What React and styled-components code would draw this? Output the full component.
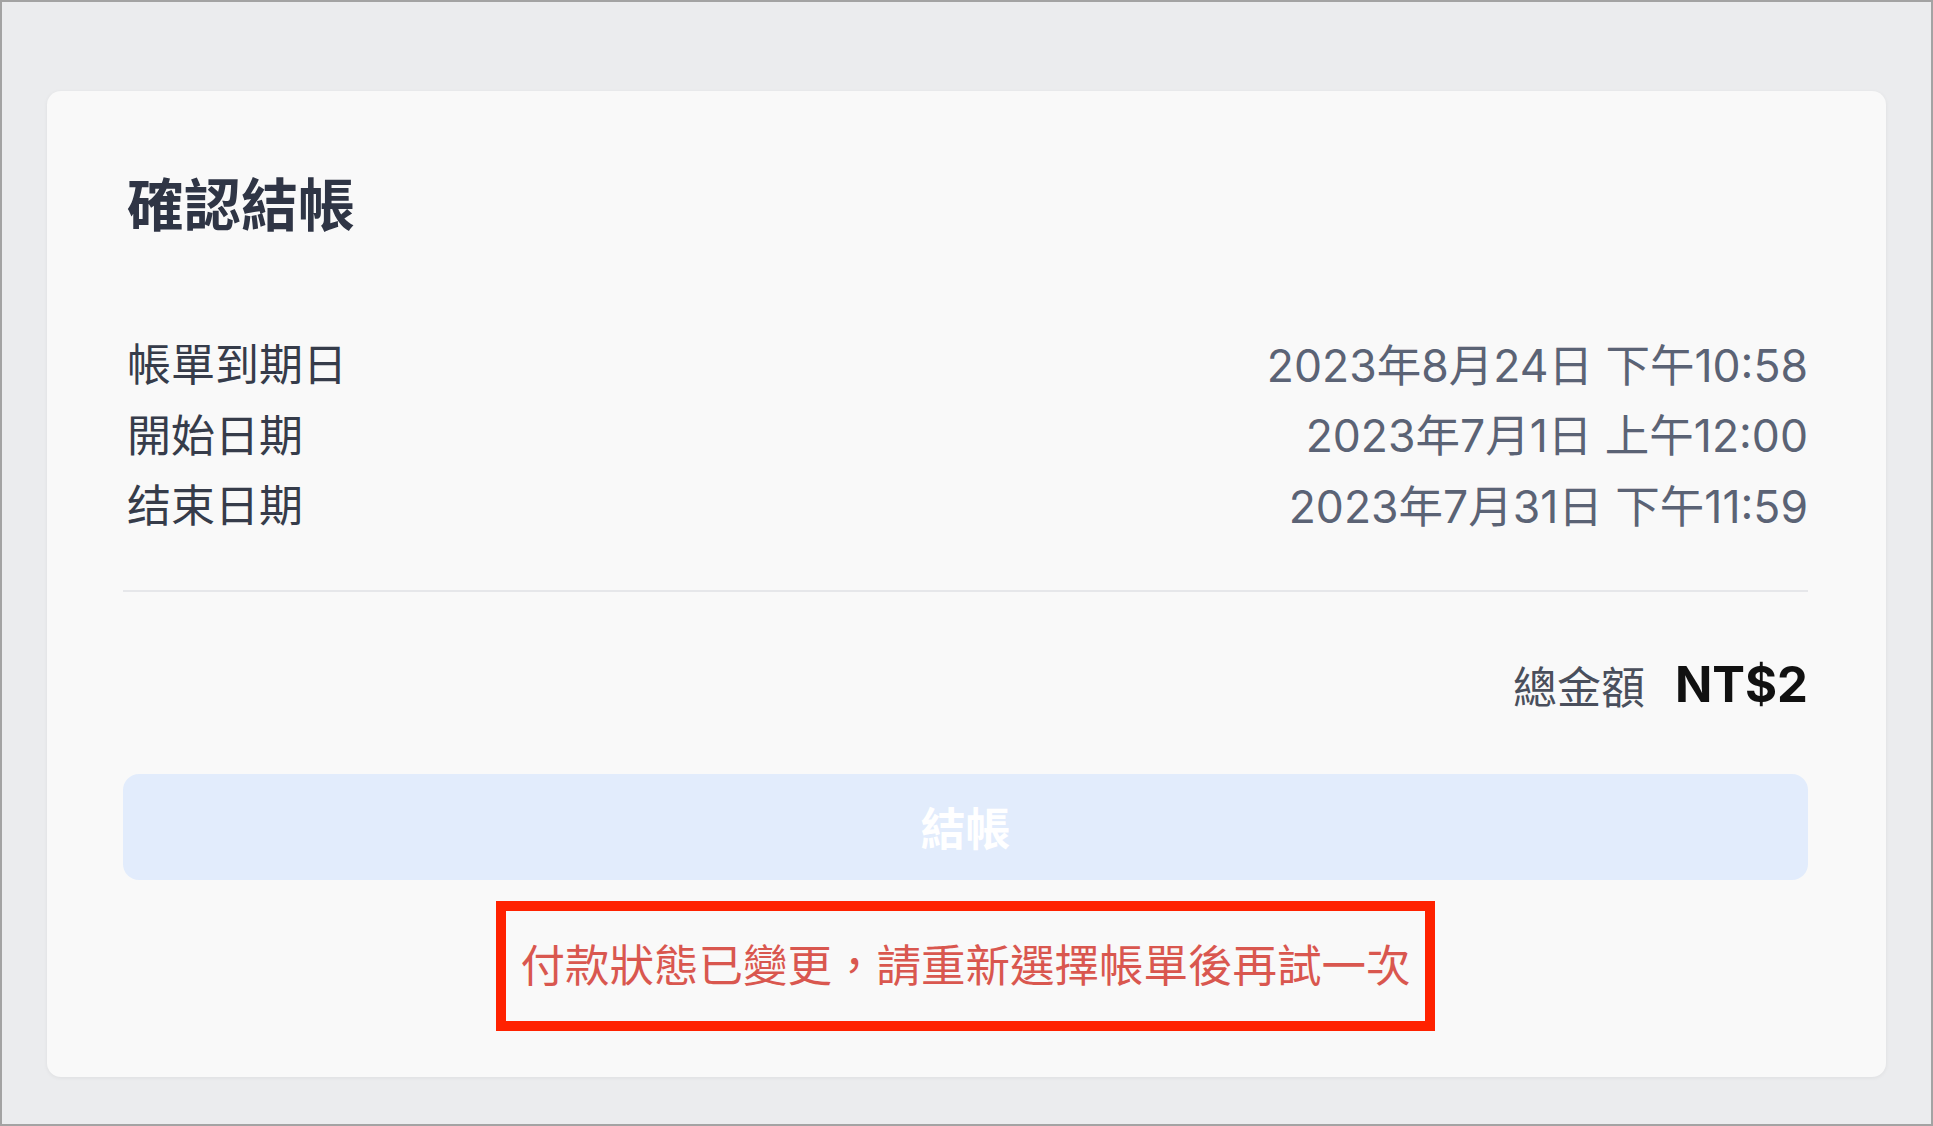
import React from 'react';
import styled, { createGlobalStyle } from 'styled-components';

const GlobalStyle = createGlobalStyle`
  html, body {
    margin: 0;
    padding: 0;
    background: #ebecee;
  }
  * {
    box-sizing: border-box;
  }
`;

const Frame = styled.div`
  width: 1933px;
  height: 1126px;
  border: 2px solid #a3a3a3;
  background: #ebecee;
  padding: 89px 45px 0 45px;
  font-family: Inter, "Noto Sans CJK TC", "Noto Sans", sans-serif;
`;

const Card = styled.section`
  background: #f9f9f9;
  border-radius: 14px;
  box-shadow: 0 1px 4px rgba(0, 0, 0, 0.06);
  padding: 81px 78px 46px 76px;
`;

const Title = styled.h1`
  margin: 0 0 0 4px;
  font-size: 57px;
  line-height: 67px;
  font-weight: 700;
  color: #2f3545;
`;

const Details = styled.div`
  margin-top: 88px;
  display: flex;
  flex-direction: column;
`;

const Row = styled.div`
  display: flex;
  justify-content: space-between;
  align-items: center;
  height: 70.5px;
  font-size: 44px;
`;

const Label = styled.span`
  margin-left: 4px;
  color: #363c4a;
`;

const Value = styled.span`
  font-size: 44.5px;
  color: #5b6375;
`;

const Divider = styled.hr`
  margin: 51px 0 0 0;
  border: none;
  border-top: 2px solid #e6e7ea;
`;

const TotalRow = styled.div`
  margin-top: 58px;
  height: 70px;
  display: flex;
  justify-content: flex-end;
  align-items: center;
  gap: 30px;
`;

const TotalLabel = styled.span`
  font-size: 44px;
  color: #4a4f5c;
`;

const TotalAmount = styled.span`
  font-size: 49px;
  font-weight: 700;
  color: #111111;
`;

const CheckoutButton = styled.button`
  margin-top: 54px;
  width: 100%;
  height: 106px;
  border: none;
  border-radius: 16px;
  background: #e2ecfc;
  color: #ffffff;
  font-family: inherit;
  font-size: 45px;
  font-weight: 700;
  cursor: not-allowed;
`;

const ErrorWrap = styled.div`
  margin-top: 21px;
  display: flex;
  justify-content: center;
`;

const ErrorBox = styled.div`
  border: 10px solid #ff2200;
  padding: 20px 14px;
  font-size: 44.5px;
  line-height: 70px;
  color: #d9574f;
`;

const rows = [
  { label: '帳單到期日', value: '2023年8月24日 下午10:58' },
  { label: '開始日期', value: '2023年7月1日 上午12:00' },
  { label: '结束日期', value: '2023年7月31日 下午11:59' },
];

export default function App() {
  return (
    <>
      <GlobalStyle />
      <Frame>
        <Card>
          <Title>確認結帳</Title>
          <Details>
            {rows.map((r) => (
              <Row key={r.label}>
                <Label>{r.label}</Label>
                <Value>{r.value}</Value>
              </Row>
            ))}
          </Details>
          <Divider />
          <TotalRow>
            <TotalLabel>總金額</TotalLabel>
            <TotalAmount>NT$2</TotalAmount>
          </TotalRow>
          <CheckoutButton disabled>結帳</CheckoutButton>
          <ErrorWrap>
            <ErrorBox>付款狀態已變更，請重新選擇帳單後再試一次</ErrorBox>
          </ErrorWrap>
        </Card>
      </Frame>
    </>
  );
}
